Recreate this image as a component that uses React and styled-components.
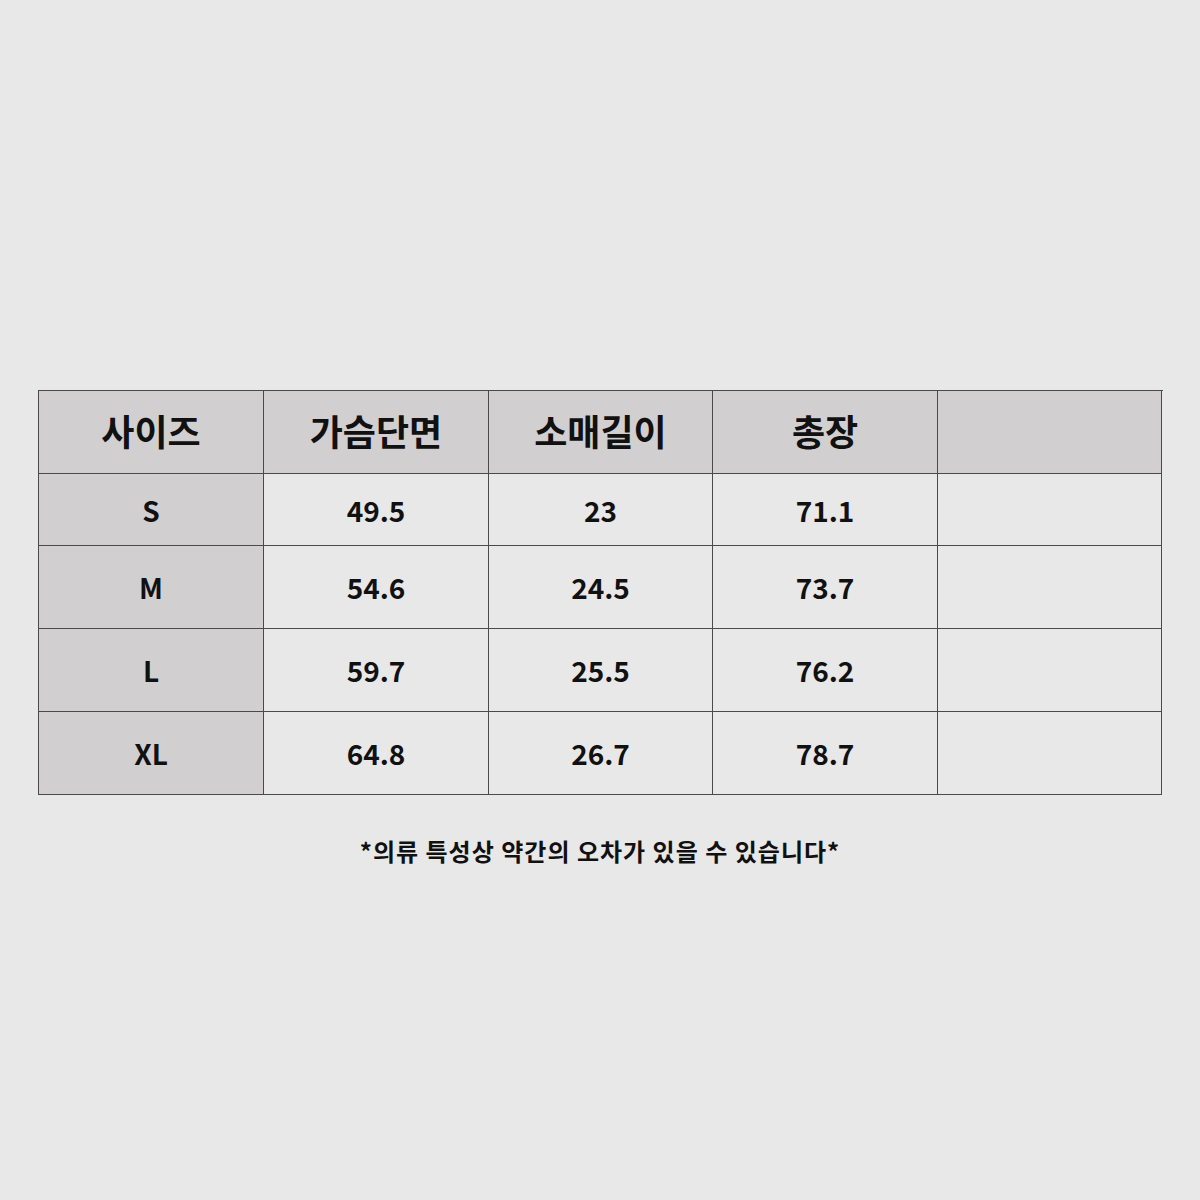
import React from 'react'
import styled, { createGlobalStyle } from 'styled-components';

const GlobalStyle = createGlobalStyle`
  html, body {
    margin: 0;
    padding: 0;
    background: #e8e8e8;
  }
  body {
    font-family: 'Noto Sans CJK KR', 'Noto Sans', sans-serif;
  }
`;

const Page = styled.div`
  width: 1200px;
  height: 1200px;
  box-sizing: border-box;
  padding-top: 390px;
  background: #e8e8e8;
`;

const Table = styled.div`
  margin-left: 38px;
  width: 1124px;
  display: grid;
  grid-template-columns: 225px 225px 224px 225px 224px;
  border-top: 1px solid #4a4a4a;
  border-left: 1px solid #4a4a4a;
`;

const Cell = styled.div`
  height: ${props => props.$h}px;
  display: flex;
  align-items: center;
  justify-content: center;
  box-sizing: border-box;
  border-right: 1px solid #4a4a4a;
  border-bottom: 1px solid #4a4a4a;
  background: ${props => props.$gray ? '#d1cfd0' : '#e8e8e8'};
  color: #111;
  font-weight: 700;
  font-size: ${props => props.$head ? '36px' : '28px'};
  padding-bottom: ${props => props.$head ? '4px' : '0'};
`;

const Note = styled.div`
  margin-top: 38px;
  text-align: center;
  font-size: 24px;
  letter-spacing: 1px;
  font-weight: 700;
  color: #111;
`;

const head = ['사이즈', '가슴단면', '소매길이', '총장', ''];
const rows = [
  { h: 72, cells: ['S', '49.5', '23', '71.1', ''] },
  { h: 83, cells: ['M', '54.6', '24.5', '73.7', ''] },
  { h: 83, cells: ['L', '59.7', '25.5', '76.2', ''] },
  { h: 83, cells: ['XL', '64.8', '26.7', '78.7', ''] },
];

function App() {
  return (
    <>
      <GlobalStyle />
      <Page>
        <Table>
          {head.map((t, i) => (
            <Cell key={'h' + i} $h={83} $gray $head>{t}</Cell>
          ))}
          {rows.map((r, ri) => r.cells.map((t, ci) => (
            <Cell key={ri + '-' + ci} $h={r.h} $gray={ci === 0}>{t}</Cell>
          )))}
        </Table>
        <Note>*의류 특성상 약간의 오차가 있을 수 있습니다*</Note>
      </Page>
    </>
  )
}

export default App
